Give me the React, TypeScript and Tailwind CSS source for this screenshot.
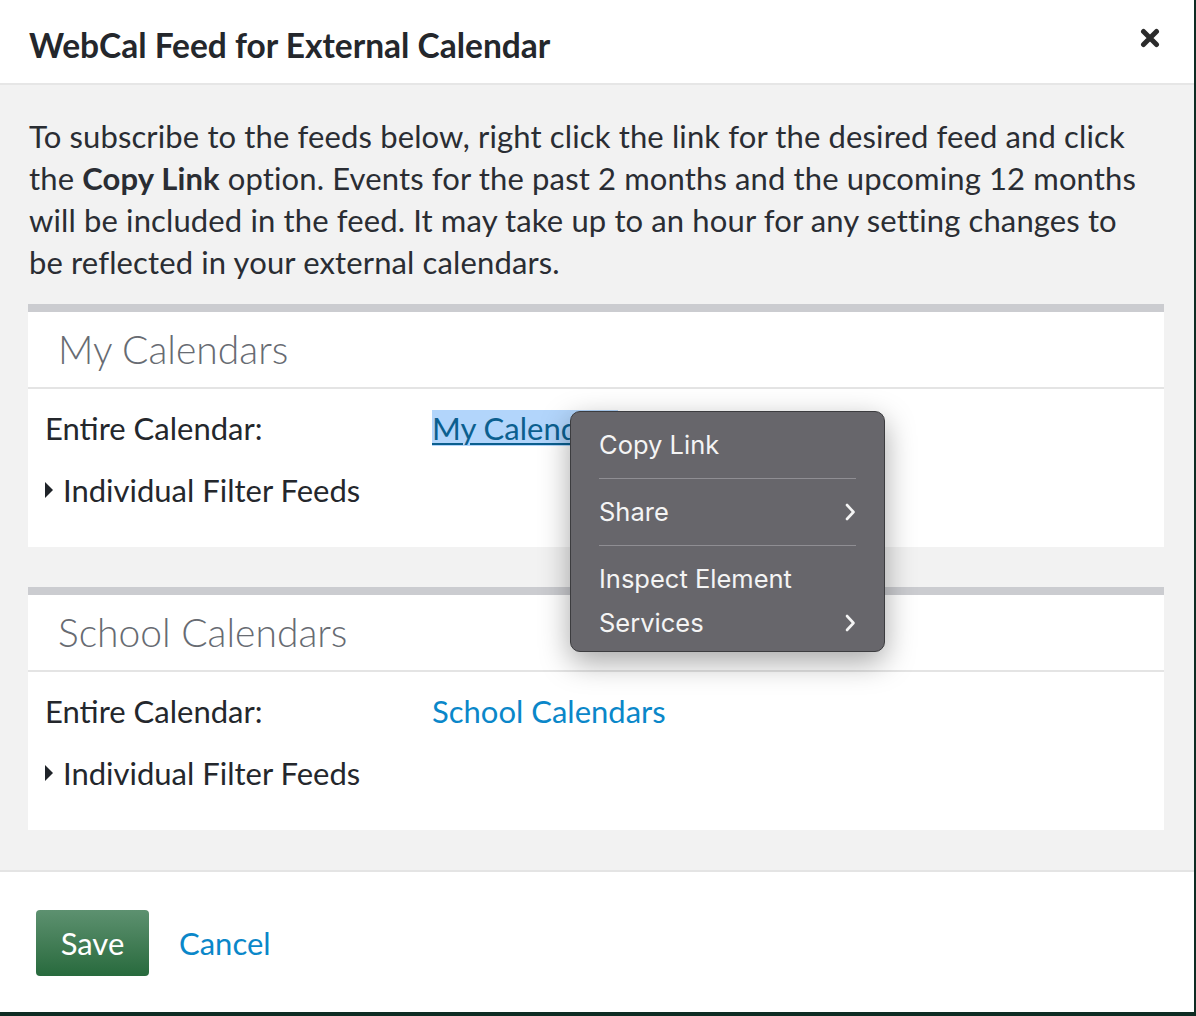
import React from 'react';

const font = { fontFamily: 'Lato, "Open Sans", sans-serif' };

const Chevron = () => (
  <svg width="12" height="20" viewBox="0 0 12 20" fill="none">
    <path d="M3 3l6.5 7L3 17" stroke="#f4f4f4" strokeWidth="2.6" strokeLinecap="round" strokeLinejoin="round" />
  </svg>
);

const Caret = () => (
  <svg width="9" height="16" viewBox="0 0 9 16" className="mr-[9px]">
    <path d="M0 0l8 8-8 8z" fill="#1f2329" />
  </svg>
);

const CalendarSection = ({ title, children }: { title: string; children: React.ReactNode }) => (
  <section className="bg-white border-t-[8px] border-[#cbccd0]">
    <div className="px-[30px] h-[77px] flex items-center border-b-2 border-[#e4e4e4]">
      <h2 className="text-[39px] text-[#676b72] font-light">{title}</h2>
    </div>
    <div className="px-[17px] pt-[20px] pb-[38px]">{children}</div>
  </section>
);

const ContextMenu = () => (
  <div
    className="absolute left-[570px] top-[411px] w-[315px] h-[241px] rounded-[10px] bg-[#67666b] border border-[#3c3c3f] shadow-[0_10px_30px_rgba(0,0,0,0.35)] px-[28px] pt-[14px] text-[25.5px] text-[#f4f4f4]"
    style={{ fontFamily: 'Inter, "Noto Sans", sans-serif' }}
  >
    <div className="h-[38px] flex items-center">Copy Link</div>
    <div className="h-px bg-[#8f8e93] my-[14px]" />
    <div className="h-[38px] flex items-center justify-between">
      Share <Chevron />
    </div>
    <div className="h-px bg-[#8f8e93] my-[14px]" />
    <div className="h-[38px] flex items-center">Inspect Element</div>
    <div className="h-[38px] mt-[6px] flex items-center justify-between">
      Services <Chevron />
    </div>
  </div>
);

export default function App() {
  return (
    <div className="min-h-screen bg-[#0e2c23]" style={font}>
      <div className="relative w-[1194px] h-[1012px] bg-white flex flex-col">
        {/* Header */}
        <header className="h-[85px] flex items-center justify-between pl-[29px] pr-[34px] border-b-2 border-[#e6e6e6] shrink-0">
          <h1 className="text-[33.5px] font-bold text-[#24272c] mt-[8px]">WebCal Feed for External Calendar</h1>
          <svg width="20" height="20" viewBox="0 0 20 20" className="mt-[-8px]">
            <path d="M3.5 3.5l13 13M16.5 3.5l-13 13" stroke="#2b2b2b" strokeWidth="5" strokeLinecap="round" />
          </svg>
        </header>

        {/* Body */}
        <div className="bg-[#f2f2f2] px-[28px] pt-[30px] pb-[40px] border-b-2 border-[#e4e4e4] shrink-0">
          <p className="text-[31px] tracking-[0.13px] leading-[42px] text-[#2a2d33] pl-px whitespace-nowrap">
            To subscribe to the feeds below, right click the link for the desired feed and click
            <br />
            the <strong className="font-bold">Copy Link</strong> option. Events for the past 2 months and the upcoming
            12 months
            <br />
            will be included in the feed. It may take up to an hour for any setting changes to
            <br />
            be reflected in your external calendars.
          </p>

          <div className="mt-[21px] flex flex-col gap-[40px] w-[1136px]">
            <CalendarSection title="My Calendars">
              <div className="flex items-center h-[38px] text-[31px] text-[#24272c]">
                <span className="w-[387px]">Entire Calendar:</span>
                <a className="text-[#0b5f8f] underline decoration-2 underline-offset-[3px] bg-[#b2d5fb] leading-[36px]">
                  My Calendars
                </a>
              </div>
              <div className="flex items-center h-[38px] mt-[24px] text-[31px] text-[#24272c]">
                <Caret />
                Individual Filter Feeds
              </div>
            </CalendarSection>

            <CalendarSection title="School Calendars">
              <div className="flex items-center h-[38px] text-[31px] text-[#24272c]">
                <span className="w-[387px]">Entire Calendar:</span>
                <a className="text-[#0a87c9]">School Calendars</a>
              </div>
              <div className="flex items-center h-[38px] mt-[24px] text-[31px] text-[#24272c]">
                <Caret />
                Individual Filter Feeds
              </div>
            </CalendarSection>
          </div>
        </div>

        {/* Footer */}
        <footer className="flex-1 flex items-start pt-[38px] pl-[36px] gap-[30px]">
          <button className="w-[113px] h-[66px] rounded-[4px] bg-gradient-to-b from-[#5d9170] to-[#276a3d] text-white text-[31px]">
            Save
          </button>
          <button className="h-[66px] text-[31px] text-[#0a87c9]">Cancel</button>
        </footer>

        <ContextMenu />
      </div>
    </div>
  );
}
